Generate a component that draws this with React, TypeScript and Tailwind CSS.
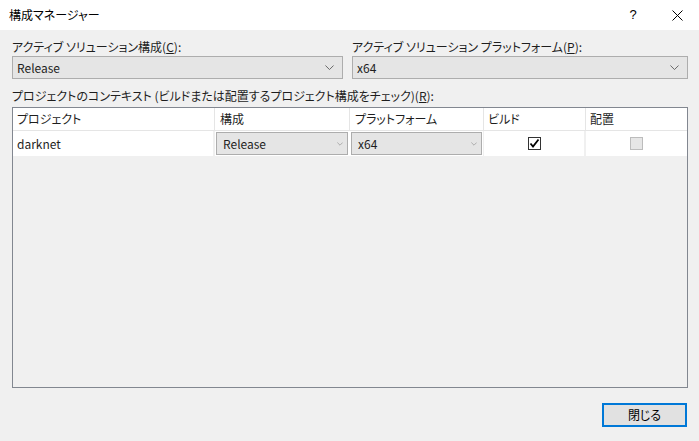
import React from "react";

const font = "font-['Noto_Sans_CJK_JP','Noto_Sans',sans-serif] [font-feature-settings:'palt']";

function Chevron({ color = "#5a5a5a", w = 10 }: { color?: string; w?: number }) {
  return (
    <svg width={w} height={w / 2 + 1} viewBox="0 0 10 6" fill="none">
      <polyline points="0.5,0.5 5,5 9.5,0.5" stroke={color} strokeWidth="1" />
    </svg>
  );
}

function TopSelect({ value }: { value: string }) {
  return (
    <div className="h-[23px] border border-[#adadad] bg-[#e5e5e5] flex items-center justify-between pl-[4px] pr-[8px] text-[12px] text-[#1e1e1e]">
      <span>{value}</span>
      <Chevron w={9} />
    </div>
  );
}

function CellSelect({ value }: { value: string }) {
  return (
    <div className="h-[23px] w-full border border-[#adadad] bg-[#e5e5e5] flex items-center justify-between pl-[6px] pr-[4px] text-[12px] text-[#1e1e1e]">
      <span>{value}</span>
      <Chevron color="#8a8a8a" w={6} />
    </div>
  );
}

export default function App() {
  return (
    <div className={`w-[699px] h-[441px] bg-[#f0f0f0] flex flex-col overflow-hidden ${font}`}>
      {/* title bar */}
      <div className="h-[30px] bg-white flex items-center pl-[9px] pr-[14px] text-[12px] text-black">
        <span className="flex-1">構成マネージャー</span>
        <span className="w-[12px] text-center mr-[33px] text-[13px] font-['Liberation_Sans',sans-serif]">?</span>
        <svg width="11" height="11" viewBox="0 0 11 11" className="mr-[2px]">
          <path d="M0.5 0.5 L10.5 10.5 M10.5 0.5 L0.5 10.5" stroke="#000" strokeWidth="1" />
        </svg>
      </div>

      {/* body */}
      <div className="flex-1 flex flex-col pl-[12px] pr-[11px] pt-[8px]">
        <div className="grid grid-cols-[331px_336px] gap-x-[9px] text-[12px] text-[#1e1e1e]">
          <div className="flex flex-col">
            <div className="h-[18px] leading-[18px]">
              アクティブ ソリューション構成(<span className="underline">C</span>):
            </div>
            <TopSelect value="Release" />
          </div>
          <div className="flex flex-col">
            <div className="h-[18px] leading-[18px]">
              アクティブ ソリューション プラットフォーム(<span className="underline">P</span>):
            </div>
            <TopSelect value="x64" />
          </div>
        </div>

        <div className="mt-[8px] h-[18px] leading-[18px] text-[12px] text-[#1e1e1e]">
          プロジェクトのコンテキスト (ビルドまたは配置するプロジェクト構成をチェック)(<span className="underline">R</span>):
        </div>

        {/* table */}
        <div className="mt-[2px] w-[676px] h-[281px] border border-[#828790] bg-[#f0f0f0] flex flex-col text-[12px] text-[#1e1e1e]">
          <div className="h-[23px] bg-white grid grid-cols-[202px_135px_134px_102px_1fr] border-b border-[#e5e5e5]">
            <div className="border-r border-[#e5e5e5] pl-[4px] flex items-center">プロジェクト</div>
            <div className="border-r border-[#e5e5e5] pl-[5px] flex items-center">構成</div>
            <div className="border-r border-[#e5e5e5] pl-[5px] flex items-center">プラットフォーム</div>
            <div className="border-r border-[#e5e5e5] pl-[4px] flex items-center">ビルド</div>
            <div className="pl-[4px] flex items-center">配置</div>
          </div>
          <div className="h-[25px] grid grid-cols-[202px_135px_134px_102px_1fr]">
            <div className="bg-white pl-[4px] flex items-center border-r-[2px] border-[#f0f0f0]">darknet</div>
            <div className="bg-white flex items-center pl-[1px] pr-[2px]">
              <CellSelect value="Release" />
            </div>
            <div className="bg-white flex items-center pl-[1px] pr-[1px] border-r-[1px] border-[#f0f0f0]">
              <CellSelect value="x64" />
            </div>
            <div className="bg-white flex items-center justify-center border-r-[2px] border-[#f0f0f0]">
              <div className="w-[13px] h-[13px] border border-[#333] bg-white flex items-center justify-center">
                <svg width="11" height="11" viewBox="0 0 11 11">
                  <path d="M1.5 5.5 L4 8.5 L9.5 1.5" stroke="#000" strokeWidth="1.8" fill="none" />
                </svg>
              </div>
            </div>
            <div className="bg-white flex items-center justify-center">
              <div className="w-[13px] h-[13px] border border-[#bcbcbc] bg-[#e6e6e6]" />
            </div>
          </div>
        </div>

        <div className="flex justify-end mt-[15px] pr-[1px]">
          <button className="w-[85px] h-[24px] border-2 border-[#0078d7] bg-[#e1e1e1] text-[12px] text-black flex items-center justify-center">
            閉じる
          </button>
        </div>
      </div>
    </div>
  );
}
